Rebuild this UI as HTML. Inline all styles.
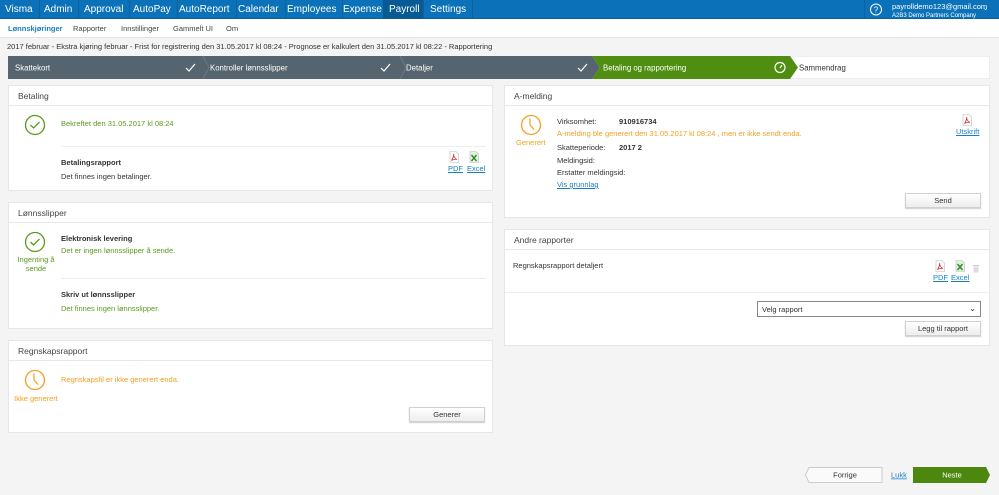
<!DOCTYPE html>
<html><head><meta charset="utf-8"><style>
*{box-sizing:border-box;margin:0;padding:0}
body{width:999px;height:495px;overflow:hidden;background:#f4f4f4;font-family:"Liberation Sans",sans-serif;font-size:7.5px;color:#333;position:relative}
.a{position:absolute}
.nav{left:0;top:0;width:999px;height:19px;background:#0b72b9;border-bottom:1px solid #08609e}
.nav span{position:absolute;top:0;height:19px;line-height:19px;color:#fff;font-size:10px;border-right:1px solid #0a62a0;padding:0 6px}
.sub{left:0;top:19px;width:999px;height:19px;background:#fff;border-bottom:1px solid #e4e4e4}
.sub span{position:absolute;top:5px;font-size:7.5px;color:#444}
.panel{background:#fff;border:1px solid #e6e6e6}
.ph{height:20px;border-bottom:1px solid #e8e8e8;font-size:8.5px;color:#444;padding:5px 9px}
.g{color:#5c9a1d}.o{color:#f4a020}.b{font-weight:bold;color:#333}
.lnk{color:#1a7fc1;text-decoration:underline}
.btn{background:linear-gradient(#fff,#ededed);border:1px solid #d0d0d0;text-align:center;color:#333;font-size:7.5px;box-shadow:0 1px 1px #ccc}
.hr{height:1px;background:#eee}
</style></head><body>
<svg width="0" height="0" style="position:absolute"><defs>
<symbol id="pdf" viewBox="0 0 10 12"><path d="M1,0.5 H7 L9.5,3 V11.5 H1 Z" fill="#fff" stroke="#bbb" stroke-width="0.6"/><path d="M2.5,9.5 C4,7 5,5 4.7,3 C4.3,5 6,8 8,8.5 C6,8 4,8.5 2.5,9.5Z" fill="none" stroke="#d42a2a" stroke-width="0.8"/></symbol>
<symbol id="xls" viewBox="0 0 10 12"><path d="M1,0.5 H7 L9.5,3 V11.5 H1 Z" fill="#e8f0e0" stroke="#bbb" stroke-width="0.6"/><path d="M2.5,4 L7.5,10 M7.5,4 L2.5,10" stroke="#2f8f2f" stroke-width="1.5"/></symbol>
</defs></svg>
<div class="a nav">
<span style="left:0;padding-left:5px">Visma</span><span style="left:38px">Admin</span><span style="left:78px">Approval</span><span style="left:127px">AutoPay</span><span style="left:173px">AutoReport</span><span style="left:232px">Calendar</span><span style="left:281px">Employees</span><span style="left:337px">Expense</span><span style="left:383px;background:#085a94;width:41px">Payroll</span><span style="left:424px">Settings</span>
<span style="left:864px;border-left:1px solid #0a62a0;border-right:0;width:22px;padding:0"><svg width="22" height="19"><circle cx="11" cy="9.5" r="5.5" fill="none" stroke="#fff" stroke-width="1"/><text x="11" y="12.5" font-size="8" fill="#fff" text-anchor="middle" font-family="Liberation Sans">?</text></svg></span>
<span style="left:886px;border:0;line-height:8px;padding-top:3px;font-size:7.5px">payrolldemo123@gmail.com<br><span style="position:static;font-size:6px;border:0;padding:0;line-height:7px">A2B3 Demo Partners Company</span></span>
<span style="left:983px;border:0;font-size:6px;padding:0">⌄</span>
</div>
<div class="a sub">
<span style="left:8px;color:#1a7fc1;font-weight:bold">Lønnskjøringer</span><span style="left:73px">Rapporter</span><span style="left:121px">Innstillinger</span><span style="left:173px">Gammelt UI</span><span style="left:226px">Om</span>
</div>
<div class="a" style="left:7px;top:42px;font-size:7.5px;color:#333">2017 februar - Ekstra kjøring februar - Frist for registrering den 31.05.2017 kl 08:24 - Prognose er kalkulert den 31.05.2017 kl 08:22 - Rapportering</div>
<svg class="a" style="left:8px;top:56px" width="982" height="23">
<rect width="982" height="23" fill="#fff" stroke="#ddd"/>
<polygon points="0,0 584,0 592,11.5 584,23 0,23" fill="#55646f"/>
<polygon points="584,0 782,0 790,11.5 782,23 584,23 592,11.5" fill="#4f8e10"/>
<path d="M195,0 L201,11.5 195,23 M392,0 L398,11.5 392,23" stroke="#6b7882" fill="none"/>
<g stroke="#fff" fill="none" stroke-width="1.2"><path d="M178,12 l3,3 6,-7"/><path d="M373,12 l3,3 6,-7"/><path d="M570,12 l3,3 6,-7"/><circle cx="772" cy="11.5" r="5"/><path d="M772,12 l2,-3"/></g>
<g font-family="Liberation Sans" font-size="7.8" fill="#fff"><text x="7" y="14.5">Skattekort</text><text x="202" y="14.5">Kontroller lønnsslipper</text><text x="398" y="14.5">Detaljer</text><text x="595" y="14.5">Betaling og rapportering</text><text x="791" y="14.5" fill="#333">Sammendrag</text></g>
</svg>

<div class="a panel" style="left:8px;top:85px;width:485px;height:106px">
<div class="ph">Betaling</div>
<svg class="a" style="left:15px;top:28px" width="22" height="22"><circle cx="11" cy="11" r="9.5" fill="none" stroke="#5c9a1d" stroke-width="1.3"/><path d="M6.5,11 l3,3 6,-6" stroke="#5c9a1d" fill="none" stroke-width="1.3"/></svg>
<div class="a g" style="left:52px;top:33px">Bekreftet den 31.05.2017 kl 08:24</div>
<div class="a hr" style="left:52px;top:60px;width:425px"></div>
<div class="a b" style="left:52px;top:72px">Betalingsrapport</div>
<div class="a" style="left:52px;top:86px">Det finnes ingen betalinger.</div>
<svg class="a" style="left:440px;top:65px" width="10" height="12"><use href="#pdf"/></svg><div class="a lnk" style="left:439px;top:78px">PDF</div>
<svg class="a" style="left:460px;top:65px" width="10" height="12"><use href="#xls"/></svg><div class="a lnk" style="left:458px;top:78px">Excel</div>
</div>
<div class="a panel" style="left:8px;top:202px;width:485px;height:127px">
<div class="ph">Lønnsslipper</div>
<svg class="a" style="left:15px;top:28px" width="22" height="22"><circle cx="11" cy="11" r="9.5" fill="none" stroke="#5c9a1d" stroke-width="1.3"/><path d="M6.5,11 l3,3 6,-6" stroke="#5c9a1d" fill="none" stroke-width="1.3"/></svg>
<div class="a g" style="left:4px;top:52px;width:46px;text-align:center;line-height:9px">Ingenting å sende</div>
<div class="a b" style="left:52px;top:31px">Elektronisk levering</div>
<div class="a g" style="left:52px;top:43px">Det er ingen lønnsslipper å sende.</div>
<div class="a hr" style="left:52px;top:75px;width:425px"></div>
<div class="a b" style="left:52px;top:87px">Skriv ut lønnsslipper</div>
<div class="a g" style="left:52px;top:101px">Det finnes ingen lønnsslipper.</div>
</div>
<div class="a panel" style="left:8px;top:340px;width:485px;height:93px">
<div class="ph">Regnskapsrapport</div>
<svg class="a" style="left:15px;top:28px" width="22" height="22"><circle cx="11" cy="11" r="9.5" fill="none" stroke="#f4a020" stroke-width="1.3"/><path d="M10,4.5 V11 l4,4.5" stroke="#f4a020" fill="none" stroke-width="1.2"/></svg>
<div class="a o" style="left:4px;top:53px;width:46px;text-align:center">Ikke generert</div>
<div class="a o" style="left:52px;top:34px">Regnskapsfil er ikke generert enda.</div>
<div class="a btn" style="left:400px;top:66px;width:76px;height:15px;line-height:13px">Generer</div>
</div>
<div class="a panel" style="left:504px;top:85px;width:486px;height:133px">
<div class="ph">A-melding</div>
<svg class="a" style="left:15px;top:28px" width="22" height="22"><circle cx="11" cy="11" r="9.5" fill="none" stroke="#f4a020" stroke-width="1.3"/><path d="M10,4.5 V11 l4,4.5" stroke="#f4a020" fill="none" stroke-width="1.2"/></svg>
<div class="a o" style="left:11px;top:52px">Generert</div>
<div class="a" style="left:52px;top:31px">Virksomhet:</div><div class="a b" style="left:114px;top:31px">910916734</div>
<div class="a o" style="left:52px;top:43px">A-melding ble generert den 31.05.2017 kl 08:24 , men er ikke sendt enda.</div>
<div class="a" style="left:52px;top:57px">Skatteperiode:</div><div class="a b" style="left:114px;top:57px">2017 2</div>
<div class="a" style="left:52px;top:70px">Meldingsid:</div>
<div class="a" style="left:52px;top:82px">Erstatter meldingsid:</div>
<div class="a lnk" style="left:52px;top:94px">Vis grunnlag</div>
<svg class="a" style="left:457px;top:28px" width="10" height="12"><use href="#pdf"/></svg><div class="a lnk" style="left:451px;top:41px">Utskrift</div>
<div class="a btn" style="left:400px;top:107px;width:76px;height:15px;line-height:13px">Send</div>
</div>
<div class="a panel" style="left:504px;top:229px;width:486px;height:117px">
<div class="ph">Andre rapporter</div>
<div class="a" style="left:8px;top:31px">Regnskapsrapport detaljert</div>
<svg class="a" style="left:430px;top:30px" width="10" height="12"><use href="#pdf"/></svg><div class="a lnk" style="left:428px;top:43px">PDF</div>
<svg class="a" style="left:450px;top:30px" width="10" height="12"><use href="#xls"/></svg><div class="a lnk" style="left:446px;top:43px">Excel</div>
<svg class="a" style="left:468px;top:35px" width="6" height="8"><rect x="0.5" y="1.5" width="5" height="6" fill="#ddd"/><rect x="0" y="0" width="6" height="1" fill="#ccc"/></svg>
<div class="a" style="left:0;top:62px;width:484px;height:1px;background:#f0f0f0"></div>
<div class="a" style="left:252px;top:71px;width:224px;height:16px;border:1px solid #888;background:#fff;padding:3px 4px">Velg rapport<span style="position:absolute;right:4px;top:2px;font-size:8px">⌄</span></div>
<div class="a btn" style="left:400px;top:91px;width:76px;height:15px;line-height:13px">Legg til rapport</div>
</div>
<svg class="a" style="left:805px;top:467px" width="186" height="16">
<polygon points="4,0.5 77,0.5 77,15.5 4,15.5 0.5,8" fill="#fafafa" stroke="#ccc"/>
<text x="40" y="10.5" font-size="7.5" text-anchor="middle" fill="#333" font-family="Liberation Sans">Forrige</text>
<text x="86" y="10.5" font-size="7.5" fill="#1a7fc1" text-decoration="underline" font-family="Liberation Sans">Lukk</text>
<polygon points="108,0 181,0 185,8 181,16 108,16" fill="#4c880f"/>
<text x="147" y="10.5" font-size="7.5" text-anchor="middle" fill="#fff" font-family="Liberation Sans">Neste</text>
</svg>
</body></html>
